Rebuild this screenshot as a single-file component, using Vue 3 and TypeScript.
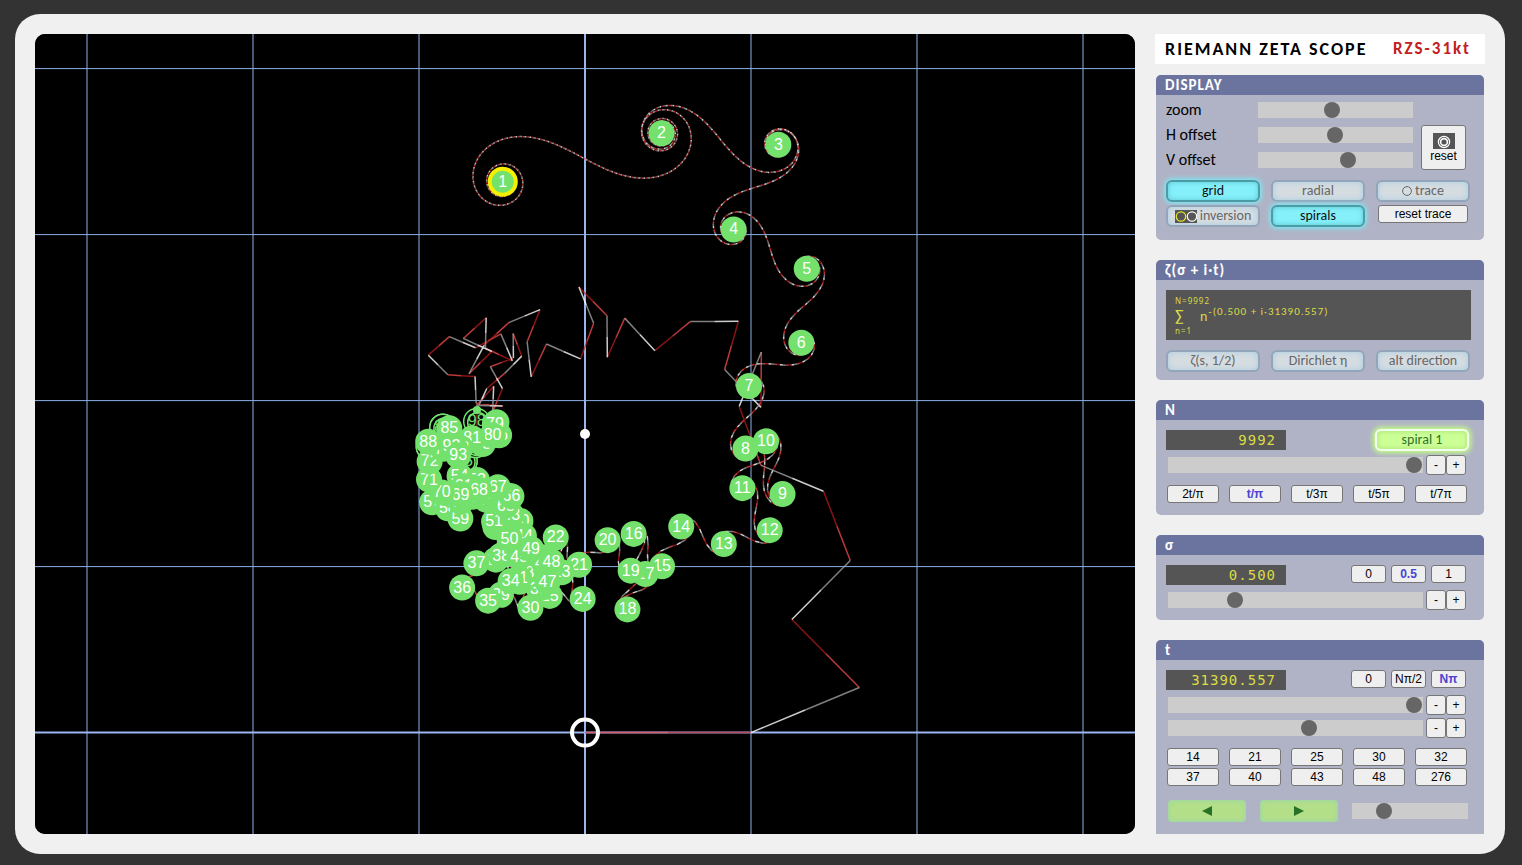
<script setup lang="ts">
import { computed, ref } from 'vue'

interface Marker { k: number; x: number; y: number; hollow: boolean }

const UNIT = 166
const ORIGIN_X = 550
const ORIGIN_Y = 698.6

const terms = ref(9992)
const sigma = ref(0.5)
const height = ref(31390.557)

const zoom = ref(475)
const hOffset = ref(496)
const vOffset = ref(590)
const termSlider = ref(996)
const sigmaSlider = ref(247)
const coarse = ref(996)
const fine = ref(556)
const speed = ref(242)

const columns = [-3, -2, -1, 1, 2, 3]
const rows = [1, 2, 3, 4]

const sums = computed(() => {
  const xs: number[] = [ORIGIN_X]
  const ys: number[] = [ORIGIN_Y]
  let x = ORIGIN_X
  let y = ORIGIN_Y
  for (let n = 1; n <= terms.value; n++) {
    const r = UNIT * Math.pow(n, -sigma.value)
    const a = height.value * Math.log(n)
    x += r * Math.cos(a)
    y += r * Math.sin(a)
    xs.push(x)
    ys.push(y)
  }
  return { xs, ys }
})

// Each term is one segment: odd terms red, even terms white, second half dimmer.
const strokes = computed(() => {
  const { xs, ys } = sums.value
  const parts: string[][] = [[], [], [], []]
  for (let n = 1; n < xs.length; n++) {
    const mx = (xs[n - 1] + xs[n]) / 2
    const my = (ys[n - 1] + ys[n]) / 2
    const base = n % 2 === 1 ? 0 : 2
    parts[base].push(`M${xs[n - 1].toFixed(2)} ${ys[n - 1].toFixed(2)}L${mx.toFixed(2)} ${my.toFixed(2)}`)
    parts[base + 1].push(`M${mx.toFixed(2)} ${my.toFixed(2)}L${xs[n].toFixed(2)} ${ys[n].toFixed(2)}`)
  }
  const names = ['red', 'red-dim', 'white', 'white-dim']
  return names.map((name, i) => ({ name, d: parts[i].join('') }))
})

// Outlined markers lie beneath the solid ones.
const outlined = new Set([86, 87, 89, 90, 94, 95, 96, 97, 98])

const markers = computed<Marker[]>(() => {
  const { xs, ys } = sums.value
  const list: Marker[] = []
  for (let k = 1; k <= 98; k++) {
    const n = Math.min(xs.length - 1, Math.round(height.value / ((2 * k - 1) * Math.PI)))
    list.push({ k, x: (xs[n] + xs[n - 1]) / 2, y: (ys[n] + ys[n - 1]) / 2, hollow: outlined.has(k) })
  }
  return [...list.filter(m => m.hollow), ...list.filter(m => !m.hollow)]
})

const termPresets = ['2t/π', 't/π', 't/3π', 't/5π', 't/7π']
const zeros = [14, 21, 25, 30, 32, 37, 40, 43, 48, 276]
</script>

<template>
  <main class="frame">
    <svg class="scope" viewBox="0 0 1100 800" role="img" aria-label="Partial sums in the complex plane">
      <rect width="1100" height="800" fill="#000" />
      <g class="grid">
        <line v-for="c in columns" :key="'c' + c" :x1="ORIGIN_X + c * UNIT" :x2="ORIGIN_X + c * UNIT" y1="0" y2="800" />
        <line v-for="r in rows" :key="'r' + r" x1="0" x2="1100" :y1="ORIGIN_Y - r * UNIT" :y2="ORIGIN_Y - r * UNIT" />
        <line class="axis" :x1="ORIGIN_X" :x2="ORIGIN_X" y1="0" y2="800" />
        <line class="axis" x1="0" x2="1100" :y1="ORIGIN_Y" :y2="ORIGIN_Y" />
      </g>
      <path v-for="s in strokes" :key="s.name" :class="['trail', s.name]" :d="s.d" />
      <g v-for="m in markers" :key="m.k" :class="['marker', { hollow: m.hollow }]">
        <circle :cx="m.x" :cy="m.y" r="13" />
        <circle v-if="m.hollow" :cx="m.x + 1" :cy="m.y + 1" r="10" />
        <circle v-if="m.k === 1" class="current" :cx="m.x" :cy="m.y" r="13" />
        <text :x="m.x" :y="m.y + 5">{{ m.k }}</text>
      </g>
      <path d="M442 376V392" stroke="#c42a2a" />
      <circle cx="442" cy="376" r="4" fill="#73e16c" />
      <circle class="origin" :cx="ORIGIN_X" :cy="ORIGIN_Y" r="13" />
      <circle cx="550" cy="400" r="5" fill="#fff" />
    </svg>

    <aside class="side">
      <h1 class="title"><span>RIEMANN ZETA SCOPE</span><span class="model">RZS-31kt</span></h1>

      <section class="panel display">
        <h2>DISPLAY</h2>
        <div class="body">
          <div class="offsets">
            <div class="knobs">
              <label for="zoom">zoom</label><input id="zoom" v-model="zoom" type="range" max="1000">
              <label for="hoff">H offset</label><input id="hoff" v-model="hOffset" type="range" max="1000">
              <label for="voff">V offset</label><input id="voff" v-model="vOffset" type="range" max="1000">
            </div>
            <button class="plain reset">
              <svg width="22" height="16" viewBox="0 0 22 16"><rect width="22" height="16" fill="#555" /><circle cx="11" cy="9" r="5.6" fill="none" stroke="#fff" stroke-width="1.2" /><circle cx="11" cy="9" r="3.4" fill="none" stroke="#fff" stroke-width="1.6" /></svg>
              <span>reset</span>
            </button>
          </div>
          <div class="toggles">
            <button class="toggle on">grid</button>
            <button class="toggle">radial</button>
            <button class="toggle"><svg width="10" height="10" viewBox="0 0 10 10"><circle cx="5" cy="5" r="4.4" fill="none" stroke="#666" /></svg> trace</button>
            <button class="toggle"><svg width="22" height="13" viewBox="0 0 22 13"><rect width="22" height="13" fill="#555" /><circle cx="6" cy="6.5" r="4.7" fill="none" stroke="#e6e622" stroke-width="1.2" /><circle cx="17" cy="6.5" r="4.7" fill="none" stroke="#fff" stroke-width="1.2" /></svg> inversion</button>
            <button class="toggle on">spirals</button>
            <button class="plain reset-trace">reset trace</button>
          </div>
        </div>
      </section>

      <section class="panel zeta">
        <h2>ζ(σ + i·t)</h2>
        <div class="body">
          <div class="formula">
            <div class="limit">N={{ terms }}</div>
            <div class="sum"><span class="sigma">∑</span><span>n<sup>-({{ sigma.toFixed(3) }} + i·{{ height.toFixed(3) }})</sup></span></div>
            <div class="limit">n=1</div>
          </div>
          <div class="toggles">
            <button class="toggle">ζ(s, 1/2)</button>
            <button class="toggle">Dirichlet η</button>
            <button class="toggle">alt direction</button>
          </div>
        </div>
      </section>

      <section class="panel count">
        <h2>N</h2>
        <div class="body">
          <div class="row"><output class="readout">{{ terms }}</output><button class="toggle spiral">spiral 1</button></div>
          <div class="slide">
            <input v-model="termSlider" type="range" max="1000" aria-label="N">
            <button class="plain step">-</button><button class="plain step">+</button>
          </div>
          <div class="presets">
            <button v-for="(p, i) in termPresets" :key="p" :class="['plain', { picked: i === 1 }]">{{ p }}</button>
          </div>
        </div>
      </section>

      <section class="panel">
        <h2>σ</h2>
        <div class="body">
          <div class="row">
            <output class="readout">{{ sigma.toFixed(3) }}</output>
            <div class="quick"><button class="plain">0</button><button class="plain picked">0.5</button><button class="plain">1</button></div>
          </div>
          <div class="slide">
            <input v-model="sigmaSlider" type="range" max="1000" aria-label="σ">
            <button class="plain step">-</button><button class="plain step">+</button>
          </div>
        </div>
      </section>

      <section class="panel height">
        <h2>t</h2>
        <div class="body">
          <div class="row">
            <output class="readout">{{ height.toFixed(3) }}</output>
            <div class="quick"><button class="plain">0</button><button class="plain">Nπ/2</button><button class="plain picked">Nπ</button></div>
          </div>
          <div class="slide">
            <input v-model="coarse" type="range" max="1000" aria-label="t coarse">
            <button class="plain step">-</button><button class="plain step">+</button>
          </div>
          <div class="slide second">
            <input v-model="fine" type="range" max="1000" aria-label="t fine">
            <button class="plain step">-</button><button class="plain step">+</button>
          </div>
          <div class="presets">
            <button v-for="z in zeros" :key="z" class="plain">{{ z }}</button>
          </div>
          <div class="play">
            <button aria-label="play backward"><svg width="10" height="10" viewBox="0 0 10 10"><path d="M0 5L10 0V10Z" fill="#277227" /></svg></button>
            <button aria-label="play forward"><svg width="10" height="10" viewBox="0 0 10 10"><path d="M10 5L0 0V10Z" fill="#277227" /></svg></button>
            <input v-model="speed" type="range" max="1000" aria-label="speed">
          </div>
        </div>
      </section>
    </aside>
  </main>
</template>

<style>
body { margin: 0; background: #333; }
</style>

<style scoped>
* { box-sizing: border-box; }
.frame {
  display: flex;
  align-items: stretch;
  gap: 20px;
  margin: 14px 17px 11px 15px;
  padding: 20px;
  border-radius: 25px;
  background: #f0f0f0;
  font-family: Carlito, Calibri, Lato, "Noto Sans", sans-serif;
  color: #000;
}
.scope { display: block; flex: 1; min-width: 0; border-radius: 10px; background: #000; }
.grid line { stroke: #8cb0e8; stroke-width: 1; }
.grid .axis { stroke: #9bb5f0; stroke-width: 2; }
.trail { fill: none; stroke-width: 1.5; }
.red { stroke: #e84848; stroke-opacity: .8; }
.red-dim { stroke: #c41c1c; stroke-opacity: .7; }
.white { stroke: #fff; stroke-opacity: .8; }
.white-dim { stroke: #aaa; stroke-opacity: .75; }
.marker circle { fill: #73e16c; }
.marker .current { fill: none; stroke: #f6f000; stroke-width: 4; }
.marker text { fill: #fff; font: 16px "Liberation Sans", Arial, sans-serif; text-anchor: middle; }
.hollow circle { fill: #000; stroke: #73e16c; stroke-width: 1.5; }
.hollow text { fill: #73e16c; }
.origin { fill: none; stroke: #fff; stroke-width: 4; }

.side { width: 330px; flex: none; }
.title {
  display: flex;
  justify-content: space-between;
  margin: 0 0 11px;
  padding: 0 14px 0 10px;
  background: #fff;
  font-size: 18px;
  line-height: 30px;
  font-weight: 700;
  letter-spacing: 2px;
}
.model { color: #c22020; font-size: 17px; }
.panel { margin: 0 1px 20px; border-radius: 5px; background: #b0b3c6; overflow: hidden; }
.panel.height { margin-bottom: 0; border-radius: 5px 5px 0 0; }
h2 {
  margin: 0;
  padding-left: 9px;
  background: #6b749f;
  color: #fff;
  font-size: 15px;
  line-height: 20px;
  letter-spacing: 1px;
}
.body { padding: 10px 13px 10px 10px; }
.display .body { padding-top: 2px; padding-bottom: 13px; }
.zeta .body { padding-bottom: 8px; }
.count .body { padding-bottom: 12px; }
.height .body { padding-bottom: 12px; }

button { padding: 0; cursor: pointer; }
.plain {
  height: 18px;
  border: 1px solid #767676;
  border-radius: 3px;
  background: #efefef;
  color: #000;
  font: 12px/14px "Liberation Sans", Arial, sans-serif;
}
.picked { color: #4a43cf; font-weight: 700; }

input[type="range"] { appearance: none; height: 16px; margin: 0; background: #ccc; min-width: 0; }
input[type="range"]::-webkit-slider-thumb { appearance: none; width: 16px; height: 16px; border-radius: 50%; background: #666; }
input[type="range"]::-moz-range-thumb { width: 16px; height: 16px; border: 0; border-radius: 50%; background: #666; }

.offsets { display: flex; align-items: flex-end; gap: 8px; }
.knobs { flex: 1; display: grid; grid-template-columns: 92px 1fr; grid-auto-rows: 25px; align-items: center; font-size: 16px; }
.reset { display: flex; flex-direction: column; align-items: center; justify-content: center; width: 45px; height: 45px; margin: 0 5px 2px 0; }
.toggles { display: grid; grid-template-columns: repeat(3, 94px); column-gap: 11px; row-gap: 3px; margin-top: 8px; }
.zeta .toggles { margin-top: 10px; }
.toggle {
  display: flex;
  align-items: center;
  justify-content: center;
  gap: 3px;
  width: 94px;
  height: 22px;
  border: 2px solid #92a5ba;
  border-radius: 6px;
  background: #d6dde1;
  box-shadow: inset 0 0 6px #a9cce0;
  color: #666;
  font: 14px/16px Carlito, Calibri, Lato, sans-serif;
}
.toggle svg { flex: none; }
.toggle.on {
  border-color: #4c9ba5;
  background: #85f0fa;
  box-shadow: inset 0 0 5px #5fc4d0, 0 0 5px 1px #72f4ff;
  color: #111;
}
.reset-trace { width: 90px; margin-left: 2px; }

.formula { width: 305px; height: 50px; padding: 6px 9px; background: #555; color: #dcdc46; letter-spacing: 1px; }
.limit { font: 8px/10px "Noto Sans", sans-serif; }
.sum { display: flex; height: 20px; gap: 14px; align-items: center; font-size: 14px; line-height: 16px; }
.sum .sigma { width: 11px; font-size: 16px; }
.sum sup { font-size: 11px; line-height: 8px; }

.row { display: flex; justify-content: space-between; align-items: flex-start; height: 20px; padding-right: 5px; }
.count .row { align-items: center; padding-right: 2px; }
.readout {
  width: 120px;
  padding-right: 10px;
  background: #555;
  color: #dcdc46;
  font: 14px/20px "DejaVu Sans Mono", monospace;
  letter-spacing: 1px;
  text-align: right;
}
.quick { display: grid; grid-template-columns: repeat(3, 35px); gap: 5px; }
.spiral {
  border-color: #f2fff0;
  background: #cdff97;
  box-shadow: inset 0 0 5px #a3df70, 0 0 5px 2px #c4ff80;
  color: #2d742d;
}
.slide { display: flex; align-items: center; height: 20px; margin-top: 5px; padding-left: 2px; }
.slide input { flex: 1; margin-right: 3px; }
.slide.second { margin-top: 3px; }
.step { width: 20px; height: 20px; }
.step:last-child { margin-right: 5px; }
.presets { display: grid; grid-template-columns: repeat(5, 52px); column-gap: 10px; row-gap: 2px; margin: 10px 0 0 1px; }
.play { display: grid; grid-template-columns: 78px 78px 1fr; align-items: center; column-gap: 14px; margin: 14px 3px 0 2px; }
.play button { height: 22px; border: 0; border-radius: 4px; background: #b3df88; box-shadow: inset 0 0 5px #94d2ba; }
</style>
